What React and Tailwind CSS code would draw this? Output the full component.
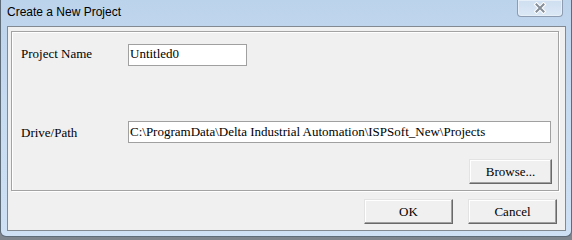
import React from "react";

const serif = { fontFamily: '"Liberation Serif", "Times New Roman", serif' };

const Btn = ({ label, className = "" }) => (
  <div
    className={`flex h-[25px] items-center justify-center border-t border-l border-[#e3e3e3] border-r border-b border-r-[#696969] border-b-[#696969] bg-[#f0f0f0] text-[13px] leading-[15px] text-black shadow-[inset_-1px_-1px_0_#a0a0a0,inset_1px_1px_0_#ffffff] ${className}`}
  >
    {label}
  </div>
);

const CloseButton = () => (
  <div className="mr-[8px] flex h-[17px] w-[46px] items-center justify-center rounded-b-[4px] border border-t-0 border-[#8d9cb0] bg-gradient-to-b from-[#cfdff1] to-[#dbe8f6] shadow-[inset_0_0_0_1px_#e6eef8]">
    <svg width="14" height="12" viewBox="0 0 14 12">
      <path d="M3.5 2.5 L10.5 9.5 M10.5 2.5 L3.5 9.5" stroke="#ffffff" strokeWidth="4" strokeLinecap="square" />
      <path d="M3.5 2.5 L10.5 9.5 M10.5 2.5 L3.5 9.5" stroke="#868e98" strokeWidth="2" strokeLinecap="square" />
    </svg>
  </div>
);

export default function App() {
  return (
    <div className="h-[240px] w-[572px] overflow-hidden bg-gradient-to-b from-[#9aa2ab] to-[#7e858d]">
      <div className="flex h-[237px] w-[572px] flex-col rounded-b-[6px] border-x border-b border-[#5e6b79] bg-gradient-to-b from-[#bcd3ec] via-[#c8dcf1] to-[#cde0f4]">
        {/* title bar */}
        <div className="flex h-[26px] items-start justify-between">
          <div
            className="pl-[6px] pt-[5px] text-[12px] leading-[15px] text-black"
            style={{ fontFamily: '"Liberation Sans", Arial, sans-serif' }}
          >
            Create a New Project
          </div>
          <CloseButton />
        </div>

        {/* client area */}
        <div
          className="ml-[6px] mr-[5px] flex h-[205px] flex-col border border-[#838991] bg-[#f0f0f0] text-black"
          style={serif}
        >
          {/* group box */}
          <div className="ml-[3px] mr-[6px] mt-[4px] flex h-[160px] flex-col border border-[#a3a3a3] shadow-[inset_1px_1px_0_#ffffff,1px_1px_0_#ffffff]">
            <div className="mt-[12px] flex items-start">
              <div className="ml-[9px] mt-[1px] w-[107px] text-[13px] leading-[17px]">Project Name</div>
              <div className="h-[22px] w-[119px] border border-[#a0a0a0] bg-white pl-[1px] text-[13px] leading-[17px]">
                Untitled0
              </div>
            </div>

            <div className="mt-[55px] flex items-start">
              <div className="ml-[9px] mt-[3px] w-[107px] text-[13px] leading-[17px]">Drive/Path</div>
              <div className="mr-[7px] h-[22px] flex-1 border border-[#a0a0a0] bg-white pl-[1px] text-[13px] leading-[19px] whitespace-nowrap">
                C:\ProgramData\Delta Industrial Automation\ISPSoft_New\Projects
              </div>
            </div>

            <div className="mt-[16px] flex justify-end pr-[6px]">
              <Btn label="Browse..." className="w-[83px]" />
            </div>
          </div>

          {/* dialog buttons */}
          <div className="mt-[8px] flex justify-end gap-[15px] pr-[8px]">
            <Btn label="OK" className="w-[89px]" />
            <Btn label="Cancel" className="w-[89px]" />
          </div>
        </div>
      </div>
    </div>
  );
}
